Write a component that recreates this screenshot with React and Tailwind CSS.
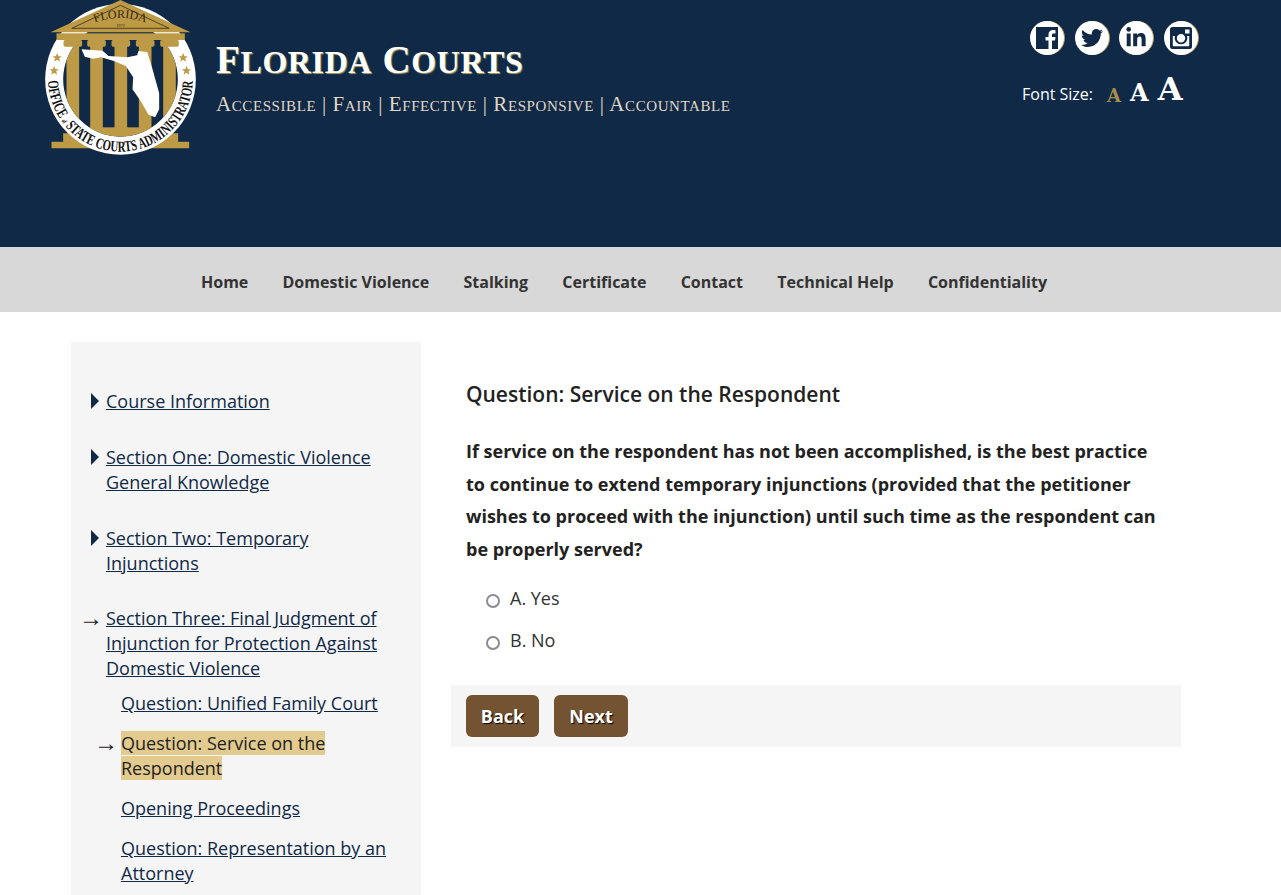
import React from "react";
import { FaTwitter, FaLinkedinIn } from "react-icons/fa";

const gold = "#bd9a45";

function Logo() {
  const cols = [129, 200, 273, 346, 419];
  return (
    <svg width="157" height="155" viewBox="40 0 470 465" className="shrink-0">
      <defs>
        <clipPath id="inner"><circle cx="272" cy="238" r="172" /></clipPath>
      </defs>
      <path d="M100 400H445V425H478V445H65V425H100Z" fill={gold} />
      <circle cx="272" cy="238" r="226" fill="#fff" />
      <circle cx="272" cy="238" r="172" fill="#0f2947" />
      <g clipPath="url(#inner)" fill={gold}>
        {cols.map((x) => (
          <rect key={x} x={x - 19} y="130" width="38" height="260" />
        ))}
        <rect x="120" y="382" width="310" height="30" />
      </g>
      {cols.map((x) => (
        <rect key={x} x={x - 28} y="120" width="56" height="20" rx="5" fill={gold} />
      ))}
      <rect x="80" y="100" width="385" height="20" fill={gold} />
      <path d="M272 0L62 97H482Z" fill={gold} />
      <path d="M272 16L126 85H418Z" fill="none" stroke="#3d3218" strokeWidth="2.500" />
      <path id="arc" d="M185 72Q272 36 358 72" fill="none" />
      <text fontFamily="'Liberation Serif', serif" fontSize="36" fill="#33290f">
        <textPath href="#arc" startOffset="50%" textAnchor="middle">FLORIDA</textPath>
      </text>
      <text x="272" y="81" textAnchor="middle" fontFamily="'Liberation Serif', serif" fontSize="13" fill="#33290f">1972</text>
      <path d="M155 148L218 152L236 168L292 172L322 166L326 153L352 156L366 200L388 280L388 328L376 352L356 344L332 302L308 268L310 232L288 198L250 182L214 172L190 176L165 170Z" fill="#fff" />
      {[[82, 173], [73, 212], [460, 173], [470, 212]].map(([x, y]) => (
        <path key={x} transform={`translate(${x} ${y})`} d="M0-14L4-4.500H14L6 2L9 12L0 6.500L-9 12L-6 2L-14-4.500H-4Z" fill={gold} />
      ))}
      <path id="ring" d="M55 238A217 217 0 0 0 489 238" fill="none" />
      <text fontFamily="'Liberation Serif', serif" fontWeight="700" fontSize="46" fill="#111">
        <textPath href="#ring" startOffset="4" textLength="672" lengthAdjust="spacingAndGlyphs">OFFICE <tspan fontSize="20">of</tspan> STATE COURTS ADMINISTRATOR</textPath>
      </text>
    </svg>
  );
}

function Social({ children }) {
  return (
    <a className="w-[34px] h-[34px] rounded-full bg-white flex items-center justify-center text-[#0f2947] shadow-[1px_0_0_#b59a5e]">{children}</a>
  );
}

function Fb() {
  return (
    <svg width="24" height="24" viewBox="0 0 24 24">
      <path fill="#0f2947" fillRule="evenodd" d="M1 1H23V23H17V14.500H20L20.500 11H17V9C17 8 17.500 7.500 18.500 7.500H20.500V4.200C19.800 4.100 19 4 18 4C15.500 4 13.500 5.500 13.500 8.500V11H10.500V14.500H13.500V23H1Z" />
    </svg>
  );
}

function Ig() {
  return (
    <svg width="24" height="24" viewBox="0 0 24 24">
      <path fill="#0f2947" fillRule="evenodd" d="M3.500 1H20.500A2.500 2.500 0 0 1 23 3.500V20.500A2.500 2.500 0 0 1 20.500 23H3.500A2.500 2.500 0 0 1 1 20.500V3.500A2.500 2.500 0 0 1 3.500 1ZM16 3.500V7.500H20.500V3.500ZM3.800 10V19.500A0.800 0.800 0 0 0 4.600 20.300H19.400A0.800 0.800 0 0 0 20.200 19.500V10H18.100A6.400 6.400 0 1 1 5.900 10ZM12 8A4.200 4.200 0 1 0 12 16.400A4.200 4.200 0 1 0 12 8Z" />
    </svg>
  );
}

function SideLink({ children, marker, indent, className = "" }) {
  return (
    <li className={`relative ${indent ? "pl-[50px]" : "pl-[35px]"} ${className}`}>
      {marker === "tri" && (
        <span className="absolute left-[20px] top-[4px] w-0 h-0 border-y-[8px] border-y-transparent border-l-[8px] border-l-[#0f2947]" />
      )}
      {marker === "arrow" && <span className={`absolute ${indent ? "left-[23px]" : "left-[8px]"} top-0 text-[#222] font-['Liberation_Serif',serif] text-[24px]`}>→</span>}
      {children}
    </li>
  );
}

const L = ({ children }) => <a className="underline text-[#0f2947]">{children}</a>;

export default function App() {
  return (
    <div className="h-[895px] overflow-hidden bg-white font-['Open_Sans',sans-serif] text-[#222]">
      <header className="h-[247px] bg-[#0f2947] flex justify-between pl-[43px] pr-[83px]">
        <div className="flex items-start gap-[16px]">
          <Logo />
          <div className="font-['Liberation_Serif',serif] [font-variant:small-caps]">
            <div className="mt-[32px] h-[52px] text-[39px] leading-[52px] font-bold tracking-[0.600px] text-white [text-shadow:1px_1px_1px_#b59a5e] whitespace-nowrap">
              F<span className="text-[45px]">lorida</span> C<span className="text-[45px]">ourts</span>
            </div>
            <div className="mt-[8px] text-[21px] leading-[24px] tracking-[0.580px] text-[#e0d8c4] whitespace-nowrap">Accessible | Fair | Effective | Responsive | Accountable</div>
          </div>
        </div>
        <div className="w-[176px] pt-[21px]">
          <div className="flex justify-end gap-[10.700px]">
            <Social><Fb /></Social>
            <Social><FaTwitter size={22} /></Social>
            <Social><FaLinkedinIn size={22} /></Social>
            <Social><Ig /></Social>
          </div>
          <div className="mt-[15px] flex items-end h-[40px] font-['DejaVu_Serif',serif] font-bold leading-none">
            <span className="font-['Open_Sans',sans-serif] font-normal text-[16px] leading-[22px] text-white mb-[5px] mr-[14px] whitespace-nowrap">Font Size:</span>
            <span className="text-[18px] text-[#a88f50] mb-[5px] mr-[9px]">A</span>
            <span className="text-[24px] text-white mb-[5px] mr-[9px]">A</span>
            <span className="text-[32px] text-white mb-[5px]">A</span>
          </div>
        </div>
      </header>

      <nav className="h-[65px] bg-[#d8d8d8] flex items-center justify-center gap-[34.200px] pr-[33px] pt-[5px] text-[16px] font-bold text-[#333]">
        <a>Home</a>
        <a>Domestic Violence</a>
        <a>Stalking</a>
        <a>Certificate</a>
        <a>Contact</a>
        <a>Technical Help</a>
        <a>Confidentiality</a>
      </nav>

      <div className="flex gap-[30px] pl-[71px] pt-[30px]">
        <aside className="w-[350px] h-[600px] shrink-0 bg-[#f5f5f5] pt-[47px] pr-[30px] text-[18px] leading-[25px]">
          <ul>
            <SideLink marker="tri" className="mb-[31px]"><L>Course Information</L></SideLink>
            <SideLink marker="tri" className="mb-[31px]"><L>Section One: Domestic Violence General Knowledge</L></SideLink>
            <SideLink marker="tri" className="mb-[30px]"><L>Section Two: Temporary Injunctions</L></SideLink>
            <SideLink marker="arrow" className="mb-[10px]"><L>Section Three: Final Judgment of Injunction for Protection Against Domestic Violence</L></SideLink>
            <SideLink indent className="mb-[15px]"><L>Question: Unified Family Court</L></SideLink>
            <SideLink indent marker="arrow" className="mb-[15px]"><span className="bg-[#e3cb8f]">Question: Service on the Respondent</span></SideLink>
            <SideLink indent className="mb-[15px]"><L>Opening Proceedings</L></SideLink>
            <SideLink indent><L>Question: Representation by an Attorney</L></SideLink>
          </ul>
        </aside>

        <main className="w-[730px] pt-[37px]">
          <div className="px-[15px]">
            <h1 className="text-[21px] leading-[30px] font-semibold">Question: Service on the Respondent</h1>
            <p className="mt-[26px] text-[18px] leading-[32.500px] font-bold">
              If service on the respondent has not been accomplished, is the best practice to continue to extend temporary injunctions (provided that the petitioner wishes to proceed with the injunction) until such time as the respondent can be properly served?
            </p>
            <div className="mt-[21px] pl-[20px] text-[18px] leading-[25px] text-[#333]">
              <label className="flex items-center gap-[10px] h-[25px]">
                <input type="radio" name="q" className="appearance-none w-[14px] h-[14px] mt-[5px] rounded-full border-2 border-[#8b8b96] bg-white" />
                A. Yes
              </label>
              <label className="flex items-center gap-[10px] h-[25px] mt-[17px]">
                <input type="radio" name="q" className="appearance-none w-[14px] h-[14px] mt-[5px] rounded-full border-2 border-[#8b8b96] bg-white" />
                B. No
              </label>
            </div>
          </div>
          <div className="mt-[32px] h-[62px] bg-[#f5f5f5] flex items-center gap-[15px] px-[15px]">
            <button className="w-[73px] h-[42px] rounded-[6px] bg-[#735331] text-white font-bold text-[18px] [text-shadow:1px_1px_1px_#000]">Back</button>
            <button className="w-[74px] h-[42px] rounded-[6px] bg-[#735331] text-white font-bold text-[18px] [text-shadow:1px_1px_1px_#000]">Next</button>
          </div>
        </main>
      </div>
    </div>
  );
}
